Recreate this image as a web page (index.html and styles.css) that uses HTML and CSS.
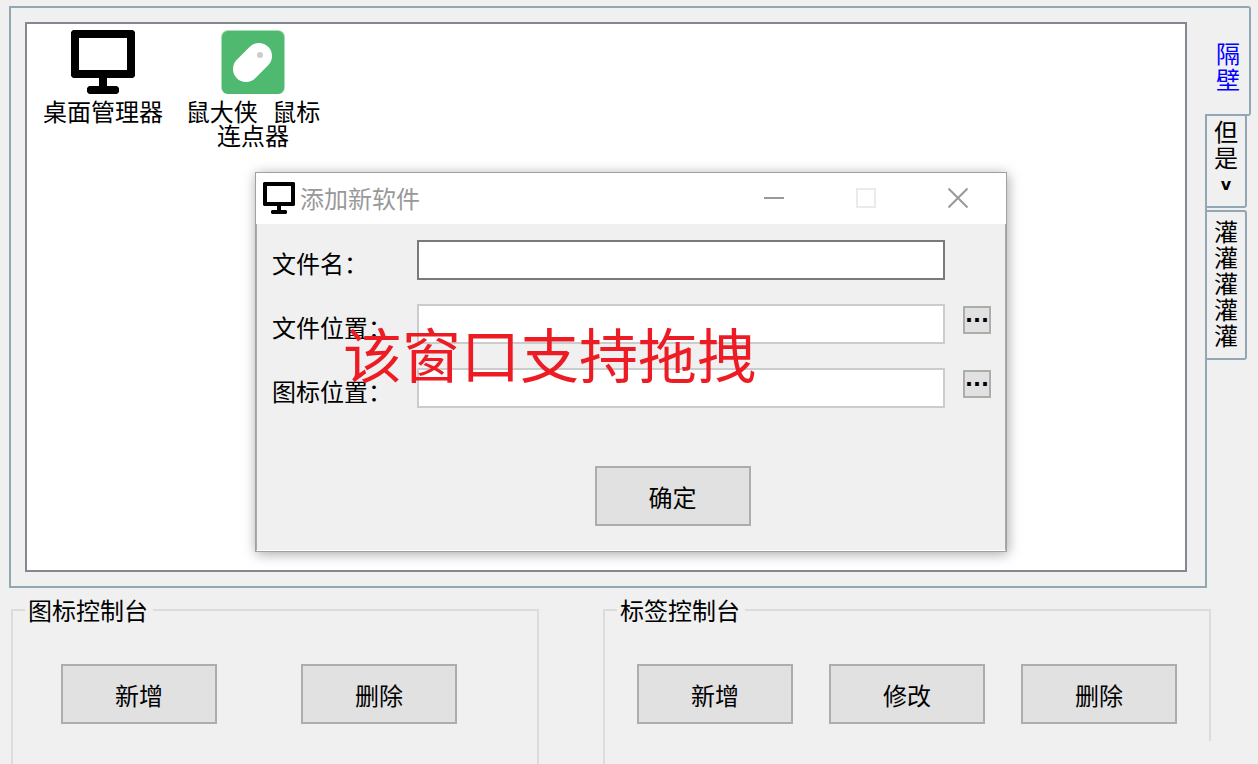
FILE: index.html
```html
<!DOCTYPE html>
<html lang="zh-CN">
<head>
<meta charset="utf-8">
<title>桌面管理器</title>
<link rel="stylesheet" href="styles.css">
</head>
<body>
<svg class="defs" aria-hidden="true">
  <symbol id="monitor" viewBox="0 0 64 64">
    <path fill-rule="evenodd" d="M2 0H62L64 2V46L62 48H36V56H46L48 58V62L46 64H18L16 62V58L18 56H28V48H2L0 46V2ZM8 8V40H56V8Z"/>
  </symbol>
</svg>

<main class="workspace">
  <section class="tab-panel">
    <div class="icon-list">
      <a class="shortcut" href="#desktop">
        <svg class="shortcut-icon"><use href="#monitor"/></svg>
        <span>桌面管理器</span>
      </a>
      <a class="shortcut" href="#clicker">
        <svg class="shortcut-icon" viewBox="0 0 64 64">
          <rect width="64" height="64" rx="7" fill="#a9dcb9"/>
          <rect x="1" y="1" width="62" height="63" rx="6" fill="#4eb96f"/>
          <path d="M25 39L38 26" stroke="#fff" stroke-width="26" stroke-linecap="round"/>
          <circle cx="39" cy="25" r="3" fill="#ccc"/>
        </svg>
        <span>鼠大侠 鼠标<br>连点器</span>
      </a>
    </div>
  </section>
  <div class="tabs" role="tablist">
    <button class="tab tab-selected" role="tab" aria-selected="true"><span>隔壁</span></button>
    <button class="tab" role="tab"><span>但是<small>v</small></span></button>
    <button class="tab tab-last" role="tab"><span>灌灌灌灌灌</span></button>
  </div>
</main>

<footer class="consoles">
  <fieldset class="console console-icons">
    <legend>图标控制台</legend>
    <div class="actions actions-wide">
      <button class="button">新增</button>
      <button class="button">删除</button>
    </div>
  </fieldset>
  <fieldset class="console console-tabs">
    <legend>标签控制台</legend>
    <div class="actions">
      <button class="button">新增</button>
      <button class="button">修改</button>
      <button class="button">删除</button>
    </div>
  </fieldset>
</footer>

<section class="dialog" role="dialog" aria-labelledby="dialog-title">
  <header class="titlebar">
    <svg class="title-icon"><use href="#monitor"/></svg>
    <h1 id="dialog-title">添加新软件</h1>
    <button class="caption" aria-label="最小化"><svg viewBox="0 0 20 20"><path d="M0 10H20" stroke="#999" stroke-width="2"/></svg></button>
    <button class="caption" aria-label="最大化" disabled><svg viewBox="0 0 20 20"><path d="M1 1H19V19H1Z" fill="none" stroke="#ebebeb" stroke-width="2"/></svg></button>
    <button class="caption" aria-label="关闭"><svg viewBox="0 0 20 20"><path d="M.5 .5L19.5 19.5M19.5 .5L.5 19.5" stroke="#999" stroke-width="2"/></svg></button>
  </header>
  <form class="form">
    <div class="field">
      <label for="name">文件名：</label>
      <input class="active" id="name" type="text">
    </div>
    <div class="field">
      <label for="path">文件位置：</label>
      <input id="path" type="text">
      <button class="browse" type="button">...</button>
    </div>
    <div class="field">
      <label for="icon">图标位置：</label>
      <input id="icon" type="text">
      <button class="browse" type="button">...</button>
    </div>
    <div class="confirm"><button class="button" type="button">确定</button></div>
  </form>
  <p class="note">该窗口支持拖拽</p>
</section>
</body>
</html>
```
FILE: styles.css
```css
* { box-sizing: border-box; }

body {
  margin: 0;
  height: 100vh;
  overflow: hidden;
  display: flex;
  flex-direction: column;
  background: #f0f0f0;
  color: #000;
  font: 24px/24px "Noto Sans CJK SC", sans-serif;
}

button, input { font: inherit; color: inherit; padding: 0; margin: 0; border-radius: 0; }
.defs { position: absolute; width: 0; height: 0; }

.workspace { flex: 1; display: flex; padding: 6px 7px 0 9px; }
.tab-panel {
  flex: 1;
  display: flex;
  padding: 14px 18px 14px 14px;
  border: 2px solid #91a7b4;
}
.icon-list {
  flex: 1;
  display: flex;
  align-items: flex-start;
  padding: 6px 0 0 1px;
  background: #fff;
  border: 2px solid #828790;
}
.shortcut {
  width: 150px;
  display: flex;
  flex-direction: column;
  align-items: center;
  gap: 9px;
  color: inherit;
  font-family: "Liberation Mono", "Noto Sans CJK SC", monospace;
  text-align: center;
  text-decoration: none;
  white-space: nowrap;
}
.shortcut-icon { width: 64px; height: 64px; }

.tabs {
  width: 46px;
  margin-left: -2px;
  display: flex;
  flex-direction: column;
  align-items: flex-start;
}
.tab {
  width: 42px;
  height: 94px;
  display: flex;
  justify-content: center;
  background: #f0f0f0;
  border: 2px solid #91a7b4;
  border-radius: 0 3px 3px 0;
  padding-top: 2px;
  line-height: 26px;
}
.tab span { width: 24px; word-break: break-all; text-align: center; }
.tab small { display: block; font: bold 16px/30px "DejaVu Sans", sans-serif; }
.tab-selected {
  width: 46px;
  height: 110px;
  margin-bottom: -2px;
  padding: 32px 0 0 2px;
  border-left: 0;
  color: #00f;
}
.tab-last { height: 150px; margin-top: 2px; padding-top: 6px; }

.consoles {
  display: grid;
  grid-template-columns: 528fr 608fr;
  gap: 64px;
  padding: 8px 47px 0 11px;
}
.console {
  min-width: 0;
  margin: 0;
  padding: 40px 32px;
  border: 2px solid #dcdcdc;
  border-bottom: 0;
}
.console-icons { padding-left: 48px; }
.console-tabs { position: relative; }
.console-tabs::after {
  content: "";
  position: absolute;
  right: -2px;
  bottom: 0;
  width: 32px;
  height: 23px;
  background: #f0f0f0;
}
.console legend { margin-left: -36px; padding: 0 5px 0 3px; line-height: 28px; }
.console-tabs legend { margin-left: -20px; }
.actions { display: flex; justify-content: space-between; }
.actions-wide { justify-content: flex-start; gap: 84px; }
.button {
  width: 156px;
  height: 60px;
  padding-top: 2px;
  background: #e1e1e1;
  border: 2px solid #adadad;
}

.dialog {
  position: absolute;
  left: 255px;
  top: 172px;
  width: 752px;
  border: 1px solid #a0a0a0;
  box-shadow: 1px 2px 12px rgba(0, 0, 0, .35);
}
.titlebar {
  height: 51px;
  display: flex;
  align-items: center;
  padding: 0 2px 2px 7px;
  background: #fff;
}
.title-icon { width: 32px; height: 32px; }
.titlebar h1 {
  flex: 1;
  margin: 0 0 0 5px;
  color: #999;
  font: 400 24px/32px "Noto Sans CJK SC", sans-serif;
}
.caption {
  width: 92px;
  height: 48px;
  display: flex;
  align-items: center;
  justify-content: center;
  background: none;
  border: 0;
}
.caption svg { width: 20px; height: 20px; }

.form {
  display: flex;
  flex-direction: column;
  gap: 24px;
  padding: 16px 14px 24px 15px;
  background: #f0f0f0;
  border: solid #aaa;
  border-width: 0 1px;
  border-bottom: 1px solid #fff;
}
.field {
  display: grid;
  grid-template-columns: 145px 1fr 46px;
  align-items: start;
}
.field label { line-height: 46px; height: 40px; white-space: nowrap; }
.field input {
  width: 100%;
  height: 40px;
  padding: 0 6px;
  background: #fff;
  border: 2px solid #ccc;
  outline: 0;
}
.field .active { border-color: #7a7a7a; }
.browse {
  justify-self: end;
  width: 28px;
  height: 28px;
  margin-top: 2px;
  padding: 0 4px 10px 0;
  background: #e1e1e1;
  border: 2px solid #adadad;
  font: bold 21px/14px "DejaVu Sans", sans-serif;
}
.confirm { display: flex; justify-content: center; padding: 34px 0 0 82px; }

.note {
  position: absolute;
  left: 87px;
  top: 148px;
  margin: 0;
  color: #ed1c24;
  font-size: 59px;
  line-height: 64px;
  white-space: nowrap;
  pointer-events: none;
}
```
